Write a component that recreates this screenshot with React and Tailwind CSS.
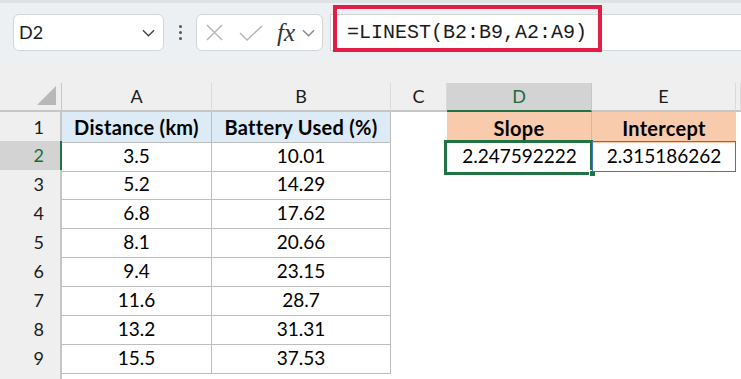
import React from "react";

const rows = [
  ["3.5", "10.01"],
  ["5.2", "14.29"],
  ["6.8", "17.62"],
  ["8.1", "20.66"],
  ["9.4", "23.15"],
  ["11.6", "28.7"],
  ["13.2", "31.31"],
  ["15.5", "37.53"],
];

const cols = ["A", "B", "C", "D", "E", ""];

function Chevron({ className }) {
  return (
    <svg viewBox="0 0 14 8" className={className} fill="none" stroke="currentColor" strokeWidth="1.5">
      <path d="M1 1l6 6 6-6" />
    </svg>
  );
}

function FormulaBar() {
  return (
    <div className="h-[62px] bg-[#edf0f3] border-t-[3px] border-[#dfe2e5] flex items-center relative">
      <div className="ml-[13px] w-[151px] h-[37px] bg-white border border-[#d3d6d9] rounded-[6px] flex items-center justify-between pl-[5px] pr-[8px]">
        <span className="text-[18px] text-[#1b1b1b]">D2</span>
        <Chevron className="w-[13px] h-[8px] text-[#444]" />
      </div>
      <div className="w-[32px] flex flex-col items-center gap-[3px]">
        <span className="w-[3px] h-[3px] bg-[#555] rounded-full"></span>
        <span className="w-[3px] h-[3px] bg-[#555] rounded-full"></span>
        <span className="w-[3px] h-[3px] bg-[#555] rounded-full"></span>
      </div>
      <div className="w-[127px] h-[37px] bg-white border border-[#d3d6d9] rounded-[6px] flex items-center pl-[9px]">
        <svg viewBox="0 0 18 18" className="w-[17px] h-[17px]" fill="none" stroke="#b3b3b3" strokeWidth="1.4">
          <path d="M1 1l16 16M17 1L1 17" />
        </svg>
        <svg viewBox="0 0 24 16" className="ml-[16px] w-[24px] h-[16px]" fill="none" stroke="#b3b3b3" strokeWidth="1.4">
          <path d="M1 8l7 7L23 1" />
        </svg>
        <span className="ml-[14px] text-[25px] italic text-[#333] leading-none" style={{ fontFamily: '"Liberation Serif", serif' }}>
          fx
        </span>
        <Chevron className="ml-[7px] w-[13px] h-[8px] text-[#888]" />
      </div>
      <div className="ml-[7px] flex-1 h-[37px] bg-white border-y border-l border-[#d3d6d9] flex items-center pl-[16px]">
        <span className="text-[20px] text-[#1a1a1a]" style={{ fontFamily: '"Liberation Mono", monospace' }}>
          =LINEST(B2:B9,A2:A9)
        </span>
      </div>
      <div className="absolute left-[333px] top-[2px] w-[269px] h-[47px] border-[4px] border-[#e11d48]"></div>
    </div>
  );
}

function ColHeader() {
  return (
    <div className="grid grid-cols-[62px_150px_179px_56px_145px_144px_1fr] h-[29px] bg-[#efefef]">
      <div className="relative border-r border-b-2 border-[#c6c6c6]">
        <svg viewBox="0 0 20 20" className="absolute right-[5px] bottom-[5px] w-[19px] h-[19px]">
          <path d="M20 0V20H0Z" fill="#b8b8b8" />
        </svg>
      </div>
      {cols.map((c, i) => (
        <div
          key={i}
          className={
            c === "D"
              ? "flex items-center justify-center bg-[#d3d3d3] text-[#1d6b3a] border-r border-[#c6c6c6] border-b-2 border-b-[#217346]"
              : "flex items-center justify-center text-[#1b1b1b] border-r border-[#dadada] border-b-2 border-b-[#c6c6c6]"
          }
        >
          {c}
        </div>
      ))}
    </div>
  );
}

export default function App() {
  return (
    <div className="w-[741px] h-[379px] overflow-hidden bg-white" style={{ fontFamily: "Lato, sans-serif" }}>
      <FormulaBar />
      <div className="h-[21px] bg-[#efefef]"></div>
      <div className="text-[18px]">
        <ColHeader />
        <div className="grid grid-cols-[62px_150px_179px_56px_145px_144px_1fr] h-[29px]">
          <div className="bg-[#efefef] border-r-2 border-b border-[#c6c6c6] flex items-center justify-end pr-[16px] text-[#1b1b1b]">1</div>
          <div className="bg-[#ddebf7] border-r border-b border-[#bdbdbd] flex items-center justify-center font-bold text-[20px] tracking-[0.3px]">Distance (km)</div>
          <div className="bg-[#ddebf7] border-r border-b border-[#bdbdbd] flex items-center justify-center font-bold text-[20px] tracking-[0.3px]">Battery Used (%)</div>
          <div></div>
          <div className="bg-[#f8cbad] border-r border-[#d9b59b] flex items-center justify-center font-bold text-[20px] tracking-[0.3px]">Slope</div>
          <div className="bg-[#f8cbad] flex items-center justify-center font-bold text-[20px] tracking-[0.3px]">Intercept</div>
          <div></div>
        </div>
        {rows.map((r, i) => (
          <div key={i} className="grid grid-cols-[62px_150px_179px_56px_145px_144px_1fr] h-[29px]">
            <div
              className={
                i === 0
                  ? "bg-[#d3d3d3] border-r-2 border-r-[#217346] border-b border-[#c6c6c6] flex items-center justify-end pr-[16px] text-[#1d6b3a]"
                  : "bg-[#efefef] border-r-2 border-b border-[#c6c6c6] flex items-center justify-end pr-[16px] text-[#1b1b1b]"
              }
            >
              {i + 2}
            </div>
            <div className="border-r border-b border-[#bdbdbd] flex items-center justify-center text-[19px]">{r[0]}</div>
            <div className="border-r border-b border-[#bdbdbd] flex items-center justify-center text-[19px]">{r[1]}</div>
            <div></div>
            {i === 0 ? (
              <>
                <div className="relative flex items-center justify-center text-[19px]">
                  2.247592222
                  <div className="absolute -left-[3px] -top-[1px] -right-[1px] -bottom-[3px] border-[3px] border-[#217346]"></div>
                  <div className="absolute -right-[4px] -bottom-[5px] w-[7px] h-[7px] bg-[#217346] border border-white"></div>
                </div>
                <div className="relative flex items-center justify-center border border-[#4472c4] text-[19px]">2.315186262</div>
              </>
            ) : (
              <>
                <div></div>
                <div></div>
              </>
            )}
            <div></div>
          </div>
        ))}
        <div className="grid grid-cols-[62px_1fr] h-[29px]">
          <div className="bg-[#efefef] border-r-2 border-[#c6c6c6]"></div>
          <div></div>
        </div>
      </div>
    </div>
  );
}
